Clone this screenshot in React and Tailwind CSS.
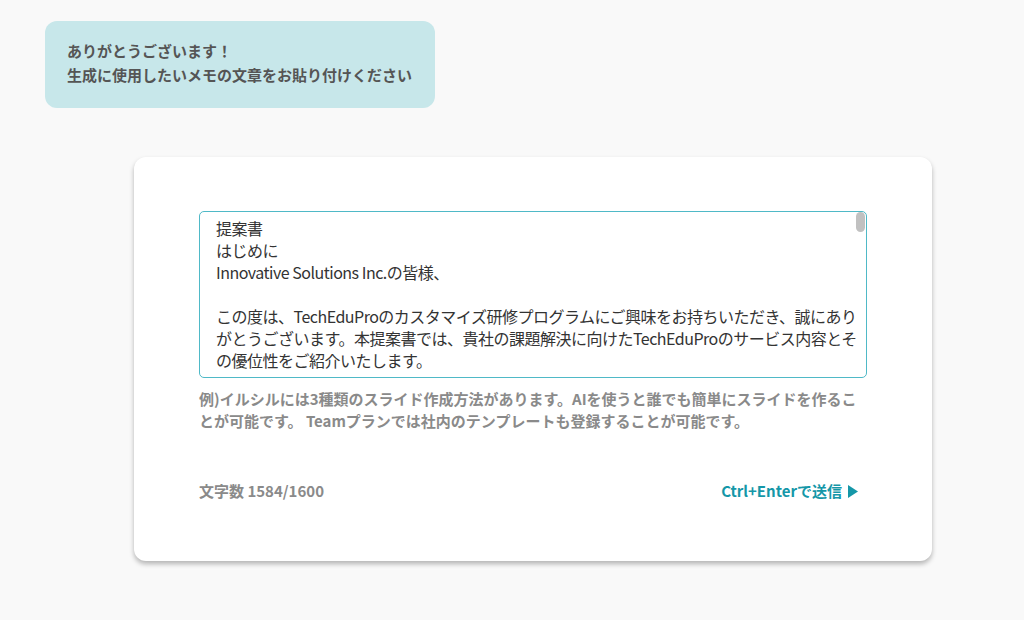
import React from 'react';

const memo = `提案書
はじめに
Innovative Solutions Inc.の皆様、

この度は、TechEduProのカスタマイズ研修プログラムにご興味をお持ちいただき、誠にありがとうございます。本提案書では、貴社の課題解決に向けたTechEduProのサービス内容とその優位性をご紹介いたします。

貴社の現状と課題
貴社では、社員のデジタルスキル向上が急務となっております。
`;

const App = () => {
    return (
        <div className="min-h-screen bg-[#f9f9f9] pt-[21px] pb-[58px] font-['Noto_Sans_CJK_JP',sans-serif]">
            {/* 吹き出し */}
            <div className="ml-[45px] w-[390px] rounded-xl bg-[#c7e7ea] pl-[22px] pt-[18px] pb-[21px] text-[15px] font-bold leading-6 text-[#555555]">
                <p>ありがとうございます！</p>
                <p>生成に使用したいメモの文章をお貼り付けください</p>
            </div>

            {/* Card */}
            <div className="ml-[134px] mt-[49px] w-[798px] rounded-xl bg-white px-[65px] pt-[54px] pb-[59px] shadow-[0_3px_5px_rgba(0,0,0,0.28)]">
                <div className="relative rounded-[5px] border border-[#4fb9c7] bg-white">
                    <textarea
                        defaultValue={memo}
                        readOnly
                        className="block h-[165px] w-full resize-none overflow-hidden bg-transparent pl-4 pr-[2px] pt-[5px] pb-[6px] text-[16px] leading-[22px] tracking-[-0.5px] text-[#333333] outline-none font-['Noto_Sans_CJK_JP',sans-serif]"
                    />
                    <div className="absolute right-[1px] top-0 h-[20px] w-[9px] rounded-full bg-[#c1c1c1]" />
                </div>
                <p className="mt-[10px] text-[15px] font-bold leading-[22px] text-[#8a8a8a]">
                    例)イルシルには3種類のスライド作成方法があります。AIを使うと誰でも簡単にスライドを作ることが可能です。 Teamプランでは社内のテンプレートも登録することが可能です。
                </p>
                <div className="mt-[48px] flex items-center justify-between pr-[9px] text-[15px] font-bold leading-[22px]">
                    <span className="text-[#8a8a8a]">文字数 1584/1600</span>
                    <button className="flex items-center gap-[6px] text-[#1597a8]">
                        Ctrl+Enterで送信
                        <svg width="10" height="13" viewBox="0 0 10 13">
                            <path d="M0 0 L10 6.5 L0 13 Z" fill="#1597a8" />
                        </svg>
                    </button>
                </div>
            </div>
        </div>
    );
};

export default App;
